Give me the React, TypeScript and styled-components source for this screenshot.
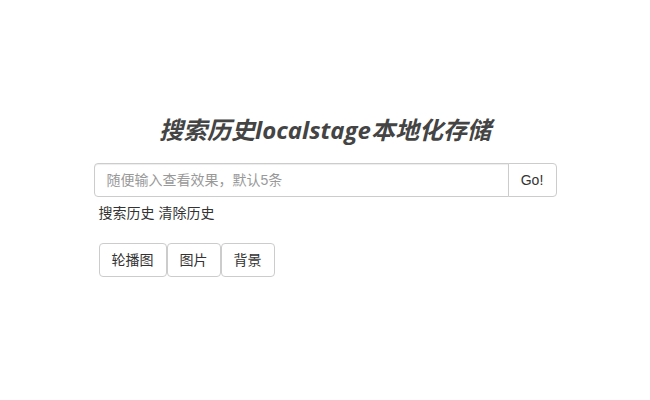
import React from "react";
import styled, { createGlobalStyle } from "styled-components";

const Global = createGlobalStyle`
  html, body { margin: 0; padding: 0; background: #fff; }
  body {
    font-family: "Liberation Sans", Arial, "Noto Sans CJK SC", sans-serif;
    font-size: 14px;
    line-height: 1.42857;
    color: #333;
  }
  * { box-sizing: border-box; }
`;

const Page = styled.div`
  width: 463px;
  margin: 0 auto;
  padding-top: 117px;
`;

const Title = styled.h3`
  margin: 0 0 20px;
  font-size: 24px;
  line-height: 26px;
  font-weight: bold;
  font-style: italic;
  color: #444;
  text-align: center;
  font-family: "Open Sans", "Noto Sans CJK SC", sans-serif;
`;

const InputGroup = styled.div`
  display: flex;
  height: 34px;
`;

const Input = styled.input`
  flex: 1;
  height: 34px;
  padding: 6px 12px;
  font-size: 14px;
  font-family: inherit;
  color: #555;
  border: 1px solid #ccc;
  border-radius: 4px 0 0 4px;
  box-shadow: inset 0 1px 1px rgba(0, 0, 0, 0.075);
  outline: none;
  &::placeholder { color: #999; }
`;

const GoButton = styled.button`
  width: 49px;
  height: 34px;
  margin-left: -1px;
  padding: 6px 12px;
  font-size: 14px;
  font-family: inherit;
  color: #333;
  background: #fff;
  border: 1px solid #ccc;
  border-radius: 0 4px 4px 0;
`;

const Links = styled.div`
  margin-top: 6px;
  padding-left: 5px;
  line-height: 20px;
  color: #333;
`;

const Tabs = styled.div`
  display: flex;
  margin-top: 20px;
  padding-left: 5px;
`;

const Tab = styled.button`
  height: 34px;
  padding: 6px 12px;
  font-size: 14px;
  font-family: inherit;
  color: #333;
  background: #fff;
  border: 1px solid #ccc;
  border-radius: 4px;
  line-height: 20px;
`;

export default function App() {
  return (
    <>
      <Global />
      <Page>
        <Title>搜索历史localstage本地化存储</Title>
        <InputGroup>
          <Input placeholder="随便输入查看效果，默认5条" />
          <GoButton>Go!</GoButton>
        </InputGroup>
        <Links>搜索历史 清除历史</Links>
        <Tabs>
          <Tab>轮播图</Tab>
          <Tab>图片</Tab>
          <Tab>背景</Tab>
        </Tabs>
      </Page>
    </>
  );
}
